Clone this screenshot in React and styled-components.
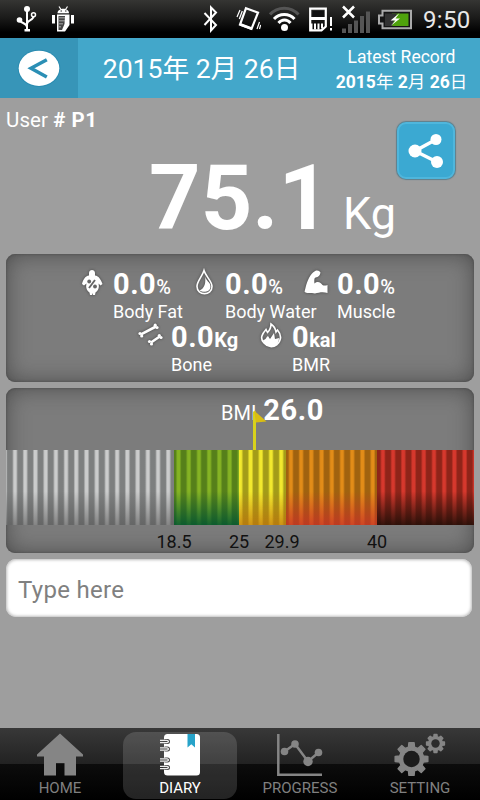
import React, { useState } from 'react'
import styled, { createGlobalStyle } from 'styled-components'

const metricRows = [
    [
        { id: 'fat', value: '0.0', unit: '%', label: 'Body Fat' },
        { id: 'water', value: '0.0', unit: '%', label: 'Body Water' },
        { id: 'muscle', value: '0.0', unit: '%', label: 'Muscle' },
    ],
    [
        { id: 'bone', value: '0.0', unit: 'Kg', label: 'Bone' },
        { id: 'bmr', value: '0', unit: 'kal', label: 'BMR' },
    ],
]

const zones = [
    { start: 0, width: 168, base: '#7d7f7f', light: '#cbcccc', bottom: 'rgba(85, 85, 85, 0.6)' },
    { start: 168, width: 64.5, base: '#56801a', light: '#85b324', bottom: 'rgba(0, 85, 50, 0.85)' },
    { start: 232.5, width: 47.5, base: '#a39c18', light: '#f2e92e', bottom: 'rgba(190, 110, 10, 0.7)' },
    { start: 280, width: 91, base: '#a0620f', light: '#e28c18', bottom: 'rgba(200, 45, 40, 0.75)' },
    { start: 371, width: 97, base: '#8f2419', light: '#d6382d', bottom: 'rgba(35, 15, 8, 0.9)' },
]

const ticks = [
    { text: '18.5', gap: 148 },
    { text: '25', gap: 25 },
    { text: '29.9', gap: 3 },
    { text: '40', gap: 55 },
]

const tabs = ['HOME', 'DIARY', 'PROGRESS', 'SETTING']

function App() {
    const [active, setActive] = useState('DIARY')

    return (
        <Screen>
            <GlobalStyle />
            <StatusBar>
                <UsbIcon />
                <AndroidIcon />
                <Spacer />
                <BluetoothIcon />
                <VibrateIcon />
                <WifiIcon />
                <CardIcon />
                <SignalIcon />
                <BatteryIcon />
                <Clock>9:50</Clock>
            </StatusBar>
            <Header>
                <BackButton aria-label="Back">
                    <BackIcon />
                </BackButton>
                <DateTitle>2015年 2月 26日</DateTitle>
                <Latest>
                    <span>Latest Record</span>
                    <LatestDate>
                        2015<i>年</i> 2<i>月</i> 26<i>日</i>
                    </LatestDate>
                </Latest>
            </Header>
            <Summary>
                <UserName>User <b># P1</b></UserName>
                <Weight>
                    <WeightValue>75.1</WeightValue>
                    <WeightUnit>Kg</WeightUnit>
                </Weight>
                <ShareButton aria-label="Share">
                    <ShareIcon />
                </ShareButton>
            </Summary>
            <MetricPanel>
                { metricRows.map((row, index) => (
                    <MetricRow key={index} $second={index === 1}>
                        { row.map((item) => (
                            <Metric key={item.id} $id={item.id}>
                                <MetricIcon id={item.id} />
                                <div>
                                    <MetricValue $light={item.unit === '%'}>{item.value}<small>{item.unit}</small></MetricValue>
                                    <MetricLabel>{item.label}</MetricLabel>
                                </div>
                            </Metric>
                        )) }
                    </MetricRow>
                )) }
            </MetricPanel>
            <BmiPanel>
                <BmiTitle>BMI <b>26.0</b></BmiTitle>
                <BmiScale>
                    <Flag width="15" height="40" viewBox="0 0 15 40">
                        <path d="M1 1.500h3v38.500h-3z" fill="#d8d21c" />
                        <path d="M2 0.500L14.500 11.500L4 12.500Z" fill="#d9bd13" />
                    </Flag>
                    { zones.map((zone) => (
                        <Zone key={zone.start} $zone={zone} />
                    )) }
                </BmiScale>
                <Ticks>
                    { ticks.map((tick) => (
                        <Tick key={tick.text} $gap={tick.gap}>{tick.text}</Tick>
                    )) }
                </Ticks>
            </BmiPanel>
            <Note placeholder="Type here" />
            <TabBar>
                { tabs.map((tab) => (
                    <Tab key={tab} $active={tab === active} onClick={() => setActive(tab)}>
                        <TabIcon name={tab} />
                        <span>{tab}</span>
                    </Tab>
                )) }
            </TabBar>
        </Screen>
    )
}

export default App

function UsbIcon() {
    return (
        <Glyph $left={16} width="21" height="27" viewBox="16 6 21 27">
            <g fill="none" stroke="#fff" strokeWidth="2">
                <path d="M27 9v21M19.500 19c0 5 7 3 7.500 8M33.500 16c0 5-6 3-6.500 8" />
                <circle cx="33.500" cy="14.800" r="2" strokeWidth="1.500" />
            </g>
            <circle cx="27" cy="9" r="3" fill="#fff" />
            <circle cx="19.500" cy="20" r="2.800" fill="#fff" />
            <path d="M24.500 29h5.500v2.500h-5.500z" fill="#fff" />
        </Glyph>
    )
}

function AndroidIcon() {
    return (
        <Glyph $left={15} width="22" height="27" viewBox="52 6 22 27">
            <path d="M57.500 13.200c0-6 11.500-6 11.500 0z" fill="#fff" />
            <path d="M59 6.500l2 3M67.500 6.500l-2 3" stroke="#fff" strokeWidth="1.200" />
            <path d="M52 15h3v8.500h-3zM71 15h3v8.500h-3zM57 14.500h12.500V25l-4.500 6.500h-8z" fill="#fff" />
            <path d="M58.500 16h6.500l-.5 8-2.500 6h-3.500z" fill="#444" />
            <path d="M60 17v12M62 17v9M64 17v6" stroke="#ccc" strokeDasharray="1.500 1.500" />
            <path d="M60.500 11h1.500M65 11h1.500" stroke="#222" />
        </Glyph>
    )
}

function BluetoothIcon() {
    return (
        <Glyph width="15" height="28" viewBox="203 5.500 15 28">
            <path d="M204.500 13.500L216 25.500L211 31V8L216 13L204.500 25.500" fill="none" stroke="#fff" strokeWidth="2" />
        </Glyph>
    )
}

function VibrateIcon() {
    return (
        <Glyph $left={17.500} width="25" height="26" viewBox="235.500 7 25 26">
            <path d="M245.500 9.200L257.500 13.700L251 29.800L239.500 25.500Z" fill="none" stroke="#fff" strokeWidth="2.200" />
            <path d="M240 24l12 4.500-1 2.500-12-4.500z" fill="#fff" />
            <path d="M236.500 18l3-7M238.800 20l3-8M256.500 30l2.500-7M259 30l1.200-4" stroke="#fff" strokeWidth="1.200" />
        </Glyph>
    )
}

function WifiIcon() {
    return (
        <Glyph $left={8.500} width="31" height="26" viewBox="269 7 31 26">
            <g fill="none" strokeWidth="3">
                <path d="M270 15.500c7.500-8.500 21-8.500 28.500 0" stroke="#555" />
                <path d="M274 20c5.500-6 15-6 20.500 0M278.500 24c3.500-4 8.500-4 12 0" stroke="#fff" />
            </g>
            <circle cx="284.500" cy="28.500" r="3.500" fill="#fff" />
        </Glyph>
    )
}

function CardIcon() {
    return (
        <Glyph $left={9} width="24" height="25" viewBox="309 7.500 24 25">
            <path d="M310.200 9.200H325.800V27L321.500 30.800H310.200Z" fill="none" stroke="#fff" strokeWidth="2.200" />
            <path d="M312.500 11.500h11.500v6h-11.500z" fill="#111" />
            <path d="M311 17.500h15v3h-15zM311 24h1.500v7h-1.500zM314 24h2v6h-2zM317.500 24h2v6h-2zM321 24h2v5h-2z" fill="#fff" />
            <path d="M330 17.500h2v9h-2zM330 28.500h2v2.500h-2z" fill="#fff" />
        </Glyph>
    )
}

function SignalIcon() {
    return (
        <Glyph $left={9} width="28" height="29" viewBox="342 5 28 29">
            <path d="M343 6.500l11 11M354 6.500l-11 11" stroke="#fff" strokeWidth="2.500" />
            <path d="M342 28.500h4V33h-4zM348 24h4v9h-4zM354 20.500h4V33h-4zM360 16h4v17h-4zM366 11.500h4V33h-4z" fill="#555" />
        </Glyph>
    )
}

function BatteryIcon() {
    return (
        <Glyph $left={8} width="34" height="21" viewBox="378 9 34 21">
            <path d="M382.500 10.800H411V28.300H382.500V23.500H379V15.500H382.500Z" fill="#161616" stroke="#aaa" strokeWidth="2" />
            <path d="M392 13.500h16.500V26H392z" fill="#4fa30c" />
            <path d="M385 13.500h12l-5 12.500h-7z" fill="#333" />
            <path d="M399.500 13l-9 7.500h5l-5 5.500 9.500-7.500h-4.500z" fill="#fff" />
        </Glyph>
    )
}

function BackIcon() {
    return (
        <svg width="44" height="40" viewBox="16.500 48 44 40">
            <ellipse cx="38.500" cy="68.300" rx="21.300" ry="18.600" fill="#1f86ac" opacity="0.600" />
            <ellipse cx="38.500" cy="68.300" rx="20.300" ry="17.600" fill="#fff" />
            <path d="M46.300 59.800L30.500 68.300L46.300 77" fill="none" stroke="#2b8fb5" strokeWidth="3.500" />
        </svg>
    )
}

function ShareIcon() {
    return (
        <svg width="36" height="36" viewBox="408 133 36 36">
            <path d="M436 139.500L415 151L437 162" fill="none" stroke="#fff" strokeWidth="3.500" />
            <circle cx="415" cy="151" r="6.500" fill="#fff" />
            <circle cx="436" cy="139.500" r="5.500" fill="#fff" />
            <circle cx="437" cy="162" r="6" fill="#fff" />
        </svg>
    )
}

function MetricIcon({ id }) {
    return (
        <MetricSvg width="28" height="28" viewBox="0 0 28 28">
            { id === 'fat' && (
                <>
                    <path d="M11 5c0-4 6-4 6 0v2.500c4 .5 6 4.500 7.500 8.500l-2 1.500-2-2c1 4 0 7-3 9l-.5 2.500h-2l-.5-2-.5 2h-2l-.5-2.500c-3-2-4-5-3-9l-2.500 2-2-1.500C5 12 7 8 11 7.500z" fill="#fff" />
                    <path d="M17 12l-6 8" stroke="#666" strokeWidth="1.800" />
                    <circle cx="11.200" cy="13.500" r="1.900" fill="#666" />
                    <circle cx="17" cy="18.500" r="1.900" fill="#666" />
                </>
            ) }
            { id === 'water' && (
                <>
                    <path d="M14 2.500C12 9 7 13 7 18.500c0 9.500 15 9.500 15 0C22 13 16 9 14 2.500z" fill="none" stroke="#fff" strokeWidth="1.600" />
                    <path d="M15 7c0 6 6 7 5.500 12-.5 5-7 6-11 3.500C15 20 16 15 15 7z" fill="#fff" />
                </>
            ) }
            { id === 'muscle' && (
                <path d="M3 22C4.500 15 7 8 11 4.500C14 1.500 17 2 18.500 4.500C18 7.500 16.500 9 13.500 9.500L12.500 10.500C12 13 12.500 15 12.500 15.500C16 12.500 19 15 20.500 17C22 18 24 17.500 25.500 17V25C21 23.500 17 24.500 13 25.500C9 25 4 26 2.500 23.500Z" fill="#fff" />
            ) }
            { id === 'bone' && (
                <>
                    <path d="M5 13.300L20 5.500M15 21.500L23.700 15.500" stroke="#fff" strokeWidth="2.600" />
                    <g fill="#fff">
                        <circle cx="4" cy="12.500" r="1.600" />
                        <circle cx="5.700" cy="15" r="1.600" />
                        <circle cx="19.200" cy="4.200" r="1.600" />
                        <circle cx="21" cy="6.500" r="1.600" />
                        <circle cx="13.500" cy="20.500" r="1.600" />
                        <circle cx="15.500" cy="23" r="1.600" />
                        <circle cx="23.300" cy="14.500" r="1.600" />
                        <circle cx="25" cy="16.500" r="1.600" />
                    </g>
                </>
            ) }
            { id === 'bmr' && (
                <>
                    <path d="M7 22C2 17 6 12 9 8.500l1.500 3C13 9 14 6 14 3c3 2 4.500 5 5 8l1.500-2c5 6 3 11-.5 14.500-4 3-9 3-13-1.500z" fill="none" stroke="#fff" strokeWidth="1.600" />
                    <path d="M6 19c3 0 3-3 5-4l2 3 4-6 1 6 4-1c0 7-5 8.500-8 8.500-4 0-7-2-8-6.500z" fill="#fff" />
                </>
            ) }
        </MetricSvg>
    )
}

function gearPath(cx, cy, outer, inner, teeth) {
    const points = []
    for (let i = 0; i < teeth; i++) {
        const mid = (i * 2 * Math.PI) / teeth - Math.PI / 2
        const step = Math.PI / teeth
        const corners = [[inner, -0.62], [outer, -0.4], [outer, 0.4], [inner, 0.62]]
        corners.forEach(([r, k]) => {
            points.push(`${(cx + r * Math.cos(mid + k * step)).toFixed(2)} ${(cy + r * Math.sin(mid + k * step)).toFixed(2)}`)
        })
    }
    return `M${points.join('L')}Z`
}

function TabIcon({ name }) {
    return (
        <svg width="60" height="44" viewBox="0 0 60 44">
            { name === 'HOME' && (
                <path d="M30 1.500L53 22.500V24.500H46V43.500H34.500V31H26V43.500H14V24.500H7V22.500Z" fill="#858585" />
            ) }
            { name === 'DIARY' && (
                <>
                    <rect x="14" y="2" width="36" height="41.500" rx="3.500" fill="#fff" />
                    <path d="M37.500 2h7.500v13.500l-3.700-3.300-3.800 3.300z" fill="#27a3c9" />
                    { [9.500, 17, 28, 35.500].map((y) => (
                        <g key={y}>
                            <rect x="13" y={y - 2.500} width="7" height="5" rx="2.500" fill="#444" />
                            <path d={`M10 ${y - 1.2}h7q3 1.200 0 2.400h-7`} fill="none" stroke="#eee" strokeWidth="1.300" />
                        </g>
                    )) }
                </>
            ) }
            { name === 'PROGRESS' && (
                <>
                    <path d="M8.300 2v40.700H52" fill="none" stroke="#858585" strokeWidth="2.500" />
                    <path d="M14.500 19.500L25 12L38 29.500L48.500 20.500" fill="none" stroke="#858585" strokeWidth="2.500" />
                    <circle cx="14.500" cy="19.500" r="3.800" fill="#858585" />
                    <circle cx="25" cy="12" r="3.800" fill="#858585" />
                    <circle cx="38" cy="29.500" r="4.700" fill="#858585" />
                    <circle cx="48.500" cy="20.500" r="3.800" fill="#858585" />
                </>
            ) }
            { name === 'SETTING' && (
                <>
                    <g fill="#858585" stroke="#858585" strokeWidth="1.500" strokeLinejoin="round">
                        <path d={gearPath(21.5, 27, 16.5, 12.2, 8)} />
                        <path d={gearPath(45.5, 11.5, 9, 6.8, 8)} />
                    </g>
                    <circle cx="21.500" cy="27" r="8.200" fill="#1c1c1c" />
                    <circle cx="45.500" cy="11.500" r="4.200" fill="#2c2c2c" />
                </>
            ) }
        </svg>
    )
}

const GlobalStyle = createGlobalStyle`
    *{
        box-sizing: border-box;
    }
    body{
        margin: 0;
        background: #9e9e9e;
        font-family: Roboto, "Noto Sans CJK SC", sans-serif;
    }
    button, input{
        font-family: inherit;
        border: none;
        padding: 0;
        outline: none;
    }
    svg{
        display: block;
        flex: none;
    }
`

const Screen = styled.div`
    width: 480px;
    height: 800px;
    display: flex;
    flex-direction: column;
    background: #9e9e9e;
    color: #fff;
    overflow: hidden;
`

const StatusBar = styled.div`
    height: 38px;
    display: flex;
    align-items: center;
    padding-right: 9px;
    background: linear-gradient(#353533, #1c1c1b 45%, #000 85%);
`

const Glyph = styled.svg`
    margin-left: ${props => props.$left || 0}px;
`

const Spacer = styled.div`
    flex: 1;
`

const Clock = styled.div`
    width: 48px;
    margin-left: 11px;
    padding-top: 1px;
    font-size: 24px;
    letter-spacing: 0.3px;
    color: #e8e8e8;
    white-space: nowrap;
`

const Header = styled.div`
    height: 60px;
    display: flex;
    background: #43a7ca;
`

const BackButton = styled.button`
    width: 78px;
    display: flex;
    align-items: center;
    justify-content: center;
    background: #3795b8;
`

const DateTitle = styled.div`
    width: 247px;
    font-size: 26.6px;
    line-height: 61px;
    text-align: center;
    white-space: nowrap;
`

const Latest = styled.div`
    flex: 1;
    padding: 7px 2px 0 0;
    font-size: 17.5px;
    line-height: 25px;
    text-align: center;
    white-space: nowrap;
    span{
        display: block;
        height: 25px;
    }
`

const LatestDate = styled.div`
    height: 25px;
    font-weight: 700;
    i{
        font-style: normal;
        font-weight: 400;
    }
`

const Summary = styled.div`
    position: relative;
    height: 156px;
    padding: 9px 6px 0;
`

const UserName = styled.div`
    height: 26px;
    font-size: 20.5px;
    line-height: 26px;
    letter-spacing: 0.1px;
    b{
        letter-spacing: 0.5px;
    }
`

const Weight = styled.div`
    display: flex;
    align-items: baseline;
    margin-top: 13px;
    padding-left: 143px;
    line-height: 106px;
    height: 106px;
`

const WeightValue = styled.span`
    width: 194px;
    font-size: 90px;
    font-weight: 700;
`

const WeightUnit = styled.span`
    font-size: 45px;
`

const ShareButton = styled.button`
    position: absolute;
    left: 397px;
    top: 24px;
    width: 58px;
    height: 57px;
    display: flex;
    align-items: center;
    justify-content: center;
    background: #3ba9d2;
    border: 2px solid #4fb6dc;
    border-radius: 9px;
    box-shadow: 0 0 1px 1px #5d7f8c;
`

const Panel = styled.div`
    margin: 0 6px 6px;
    border-radius: 9px;
    background: #7c7c7c;
    box-shadow: inset 0 0 22px rgba(50, 50, 50, 0.65), inset 0 0 3px #555;
`

const MetricPanel = styled(Panel)`
    height: 128px;
    padding-top: 14px;
`

const MetricRow = styled.div`
    display: flex;
    height: 53px;
    padding-left: ${props => props.$second ? 130 : 72}px;
`

const Metric = styled.div`
    display: flex;
    width: ${props => props.$id === 'bone' ? 121 : 112}px;
    white-space: nowrap;
`

const MetricSvg = styled.svg`
    margin-right: 7px;
    filter: drop-shadow(0 0 1.5px #444);
`

const MetricValue = styled.div`
    height: 32px;
    font-size: 29px;
    font-weight: 700;
    line-height: 32px;
    letter-spacing: 0.5px;
    small{
        font-size: 20px;
        font-weight: ${props => props.$light ? 500 : 700};
        letter-spacing: 0;
    }
`

const MetricLabel = styled.div`
    font-size: 18px;
    line-height: 24px;
`

const BmiPanel = styled(Panel)`
    height: 165px;
    overflow: hidden;
`

const BmiTitle = styled.div`
    height: 62px;
    padding: 5px 0 0 215px;
    font-size: 20px;
    line-height: 34px;
    white-space: nowrap;
    b{
        margin-left: 2px;
        font-size: 29px;
        letter-spacing: 0.6px;
    }
`

const BmiScale = styled.div`
    position: relative;
    display: flex;
    height: 75px;
`

const Flag = styled.svg`
    position: absolute;
    left: 246px;
    top: -40px;
`

// the ribs keep one pitch across every zone, so each zone shifts its own pattern
const Zone = styled.div`
    width: ${props => props.$zone.width}px;
    background:
        linear-gradient(transparent 55%, ${props => props.$zone.bottom}),
        linear-gradient(
            90deg,
            ${props => props.$zone.base} 22%,
            ${props => props.$zone.light} 38% 62%,
            ${props => props.$zone.base} 78%
        ) ${props => 3.9 - props.$zone.start}px 0 / 10.22px 100%;
`

const Ticks = styled.div`
    display: flex;
    padding-top: 5px;
    color: #111;
    font-size: 18px;
    line-height: 24px;
`

const Tick = styled.div`
    width: 40px;
    margin-left: ${props => props.$gap}px;
    text-align: center;
`

const Note = styled.input`
    width: 466px;
    height: 58px;
    margin: 0 6px;
    padding: 4px 12px 0;
    font-size: 24px;
    letter-spacing: 0.3px;
    color: #333;
    background: #fff;
    border-radius: 10px;
    box-shadow: inset 0 0 3px 1px #bbb;
    &::placeholder{
        color: #808080;
        opacity: 1;
    }
`

const TabBar = styled.div`
    height: 72px;
    margin-top: auto;
    display: flex;
    background: linear-gradient(#383838, #222 50%, #0c0c0c 50%, #000);
`

const Tab = styled.button`
    width: 114px;
    height: 67px;
    margin: 4px 3px 1px;
    display: flex;
    flex-direction: column;
    align-items: center;
    border-radius: 13px;
    font-size: 15px;
    line-height: 24px;
    color: ${props => props.$active ? '#fff' : '#808080'};
    background: ${props => props.$active ? 'rgba(255, 255, 255, 0.14)' : 'transparent'};
`
